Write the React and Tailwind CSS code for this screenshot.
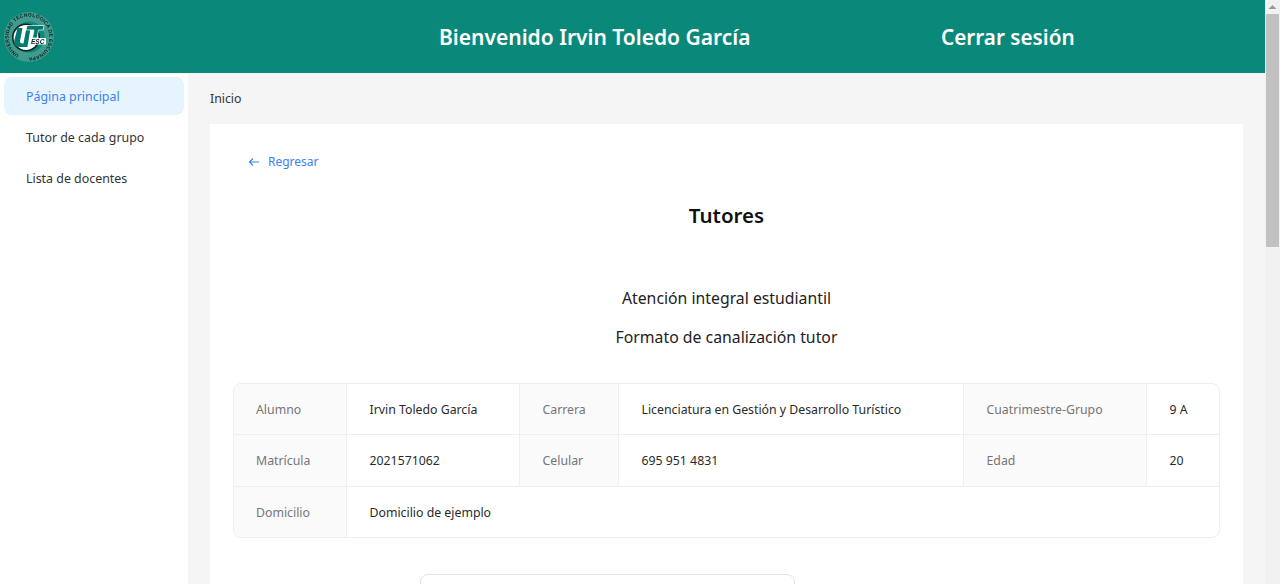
import React from "react";

function Logo() {
  return (
    <svg width="54" height="54" viewBox="0 0 54 54" className="block">
      <defs>
        <filter id="soft" x="-10%" y="-10%" width="120%" height="120%">
          <feGaussianBlur stdDeviation="0.3" />
        </filter>
        <path id="ring" d="M27 47.5A20.5 20.5 0 1 1 27.01 47.5" />
      </defs>
      <g filter="url(#soft)">
        <circle cx="27" cy="27" r="25" fill="#3f9a8d" />
        <circle cx="27" cy="27" r="15.5" fill="#0a897b" />
        <text fontSize="5" fontWeight="700" fill="#0c2624" fontFamily="Liberation Sans, sans-serif" letterSpacing="0.2">
          <textPath href="#ring" startOffset="8%">UNIVERSIDAD TECNOLÓGICA DE ESCUINAPA</textPath>
        </text>
        <circle cx="24" cy="27.5" r="14" fill="#0c2624" />
        <circle cx="24" cy="27.5" r="12.4" fill="#ffffff" />
        <path d="M15.5 18L20.5 18L18 31Q17.7 33.4 19.8 33.4L21.5 33.4L24.4 18L28.6 18L25.4 37L16.5 37Q11.5 36.5 12.2 31Z" fill="#067a6d" />
        <path d="M25 15.5L42 15.5L41.2 20L36.5 20L35 28L30.5 28L32 20L24.2 20Z" fill="#067a6d" stroke="#ffffff" strokeWidth="0.7" />
        <rect x="28" y="28" width="16" height="6.5" fill="#ffffff" />
        <text x="29" y="33.5" fontSize="6.5" fontWeight="700" fontStyle="italic" fill="#0c2624" fontFamily="Liberation Sans, sans-serif">ESC</text>
      </g>
    </svg>
  );
}

const cell = "font-normal text-left pr-2 border-r border-[#efefef]";
const label = cell + " bg-[#fafafa] text-[#757575] pl-[23px]";
const first = cell + " bg-[#fafafa] text-[#757575] pl-[22px]";
const value = "font-normal text-left pr-2 text-[#2a2a2a] pl-[23px] border-r border-[#efefef]";
const last = "font-normal text-left pr-2 text-[#2a2a2a] pl-[23px]";

export default function App() {
  return (
    <div className="flex h-[584px] w-[1280px] overflow-hidden bg-[#f5f5f5] text-[#222222] font-['Noto_Sans','Open_Sans',sans-serif]">
      <div className="flex w-[1265px] flex-col">
        <header className="flex h-[73px] shrink-0 items-center bg-[#0a897b] text-white">
          <div className="ml-[2px] w-[437px]">
            <Logo />
          </div>
          <div className="w-[502px] pt-[2px] text-[21px] font-semibold leading-none">Bienvenido Irvin Toledo García</div>
          <div className="pt-[2px] text-[20.7px] font-semibold leading-none">Cerrar sesión</div>
        </header>
        <div className="flex min-h-0 flex-1">
          <aside className="flex w-[188px] shrink-0 flex-col gap-[3px] bg-white px-1 pt-1 text-[12.4px] text-[#333333]">
            <div className="flex h-[38px] items-center rounded-lg bg-[#e6f4ff] pl-[22px] pt-[3px] text-[#3b82f0]">Página principal</div>
            <div className="flex h-[38px] items-center pl-[22px] pt-[3px]">Tutor de cada grupo</div>
            <div className="flex h-[38px] items-center pl-[22px] pt-[3px]">Lista de docentes</div>
          </aside>
          <main className="flex min-w-0 flex-1 flex-col px-[22px]">
            <div className="flex h-[51px] shrink-0 items-center pt-[1px] text-[12.3px] text-[#333333]">Inicio</div>
            <section className="flex-1 bg-white px-[23px]">
              <div className="flex h-[75px] items-center gap-2 pl-[15px] pt-[1px] text-[12px] text-[#3b82f0]">
                <svg width="12" height="12" viewBox="0 0 12 12" fill="none" stroke="currentColor" strokeWidth="1.1">
                  <path d="M11 6H1.5M5 2.5L1.5 6L5 9.5" />
                </svg>
                <span>Regresar</span>
              </div>
              <h1 className="m-0 h-[58px] text-center text-[20.5px] font-semibold leading-[32px] text-[#111111]">Tutores</h1>
              <div className="mt-[28px] text-center text-[15.8px] leading-[26px] text-[#222222]">Atención integral estudiantil</div>
              <div className="mt-[13px] text-center text-[15.8px] leading-[26px] text-[#222222]">Formato de canalización tutor</div>
              <div className="mt-[33px] overflow-hidden rounded-lg border border-[#efefef]">
                <table className="w-full table-fixed border-collapse text-[12.3px]">
                  <colgroup>
                    <col className="w-[112px]" />
                    <col className="w-[173px]" />
                    <col className="w-[99px]" />
                    <col className="w-[345px]" />
                    <col className="w-[183px]" />
                    <col />
                  </colgroup>
                  <tbody>
                    <tr className="h-[50px] border-b border-[#efefef] [&>*]:pt-[3px]">
                      <th className={first}>Alumno</th>
                      <td className={value}>Irvin Toledo García</td>
                      <th className={label}>Carrera</th>
                      <td className={value}>Licenciatura en Gestión y Desarrollo Turístico</td>
                      <th className={label}>Cuatrimestre-Grupo</th>
                      <td className={last}>9 A</td>
                    </tr>
                    <tr className="h-[52px] border-b border-[#efefef] [&>*]:pt-[2px]">
                      <th className={first}>Matrícula</th>
                      <td className={value}>2021571062</td>
                      <th className={label}>Celular</th>
                      <td className={value}>695 951 4831</td>
                      <th className={label}>Edad</th>
                      <td className={last}>20</td>
                    </tr>
                    <tr className="h-[51px] [&>*]:pt-[2px]">
                      <th className={first}>Domicilio</th>
                      <td className={last} colSpan={5}>Domicilio de ejemplo</td>
                    </tr>
                  </tbody>
                </table>
              </div>
              <div className="ml-[187px] mt-[36px] h-[60px] w-[375px] rounded-lg border border-[#e3e3e3] bg-white" />
            </section>
          </main>
        </div>
      </div>
      <div className="flex w-[15px] shrink-0 flex-col bg-[#f1f1f1]">
        <div className="flex h-[14px] items-center justify-center">
          <svg width="9" height="6" viewBox="0 0 9 6"><path d="M4.5 1L8.5 5H0.5Z" fill="#9a9a9a" /></svg>
        </div>
        <div className="mx-[1px] h-[233px] bg-[#c1c1c1]" />
      </div>
    </div>
  );
}
